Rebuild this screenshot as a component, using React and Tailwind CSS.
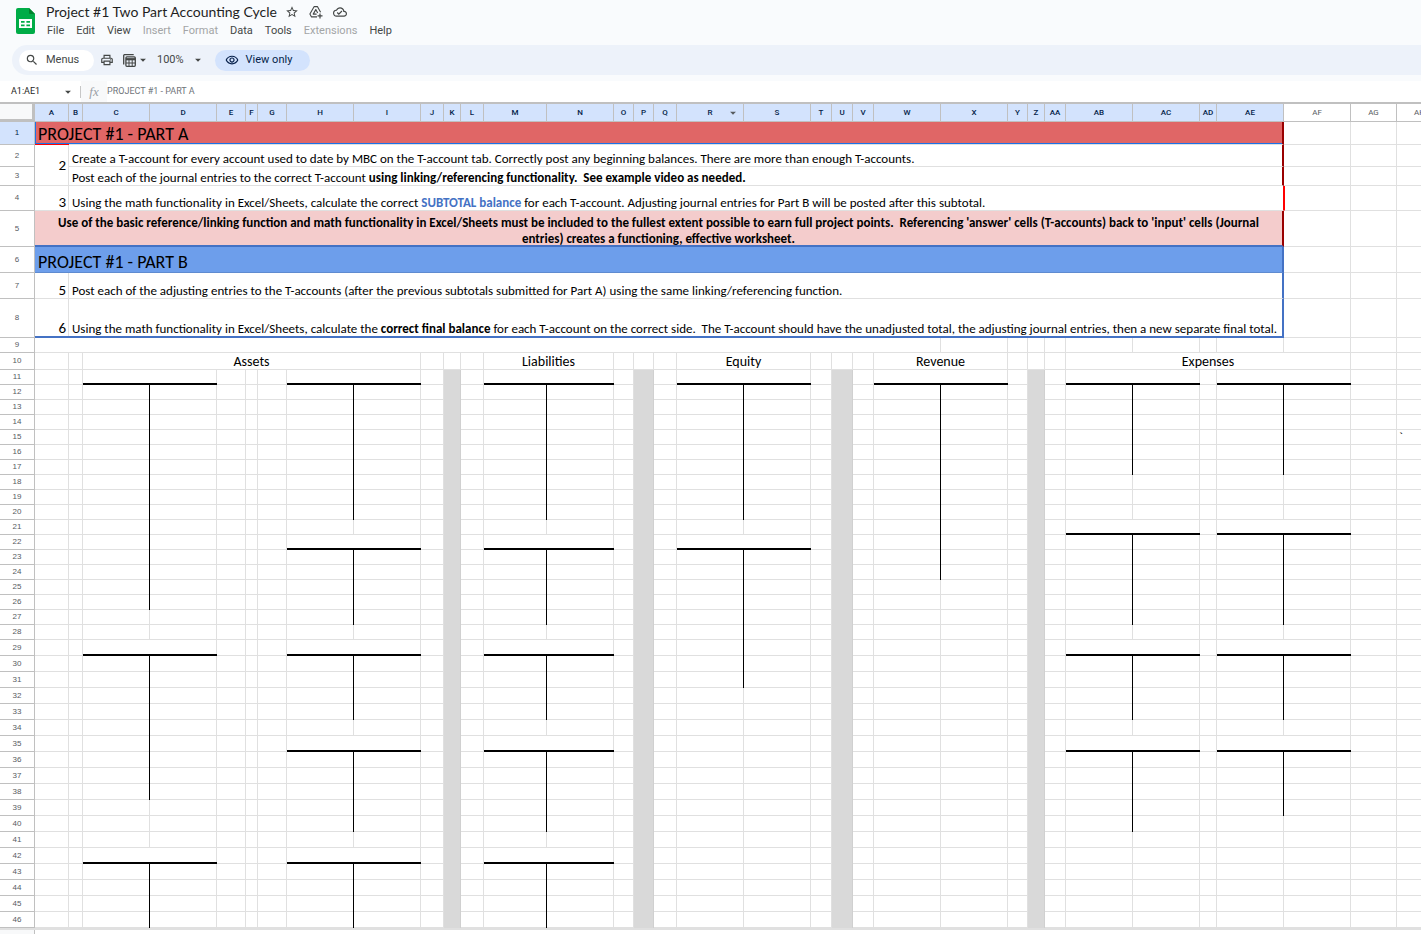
import {
  MdStarOutline,
  MdOutlineCloudDone,
  MdSearch,
  MdOutlinePrint,
  MdArrowDropDown,
  MdOutlineRemoveRedEye,
} from 'react-icons/md';

const MENUS = [
  { label: 'File' },
  { label: 'Edit' },
  { label: 'View' },
  { label: 'Insert', disabled: true },
  { label: 'Format', disabled: true },
  { label: 'Data' },
  { label: 'Tools' },
  { label: 'Extensions', disabled: true },
  { label: 'Help' },
];

const COLUMNS = [
  ['A', 34], ['B', 14], ['C', 67], ['D', 67], ['E', 29], ['F', 12], ['G', 29],
  ['H', 67], ['I', 67], ['J', 23], ['K', 17], ['L', 23], ['M', 63], ['N', 67],
  ['O', 20], ['P', 20], ['Q', 23], ['R', 67], ['S', 67], ['T', 21], ['U', 21],
  ['V', 21], ['W', 67], ['X', 67], ['Y', 20], ['Z', 17], ['AA', 21], ['AB', 67],
  ['AC', 67], ['AD', 17], ['AE', 67], ['AF', 67], ['AG', 46], ['AH', 46],
];
const NAMES = COLUMNS.map(([name]) => name);
const HEADER_WIDTH = 35;
const TABLE_WIDTH = COLUMNS.reduce((sum, [, w]) => sum + w, HEADER_WIDTH);
const LAST_SELECTED = NAMES.indexOf('AE');
const LAST_ROW = 46;

const TALL_ROWS = { 1: 23, 2: 22, 3: 19, 4: 25, 5: 36, 6: 26, 7: 26, 8: 39, 10: 17 };
const rowHeight = (row) => TALL_ROWS[row] || (row < 29 ? 15 : 16);

const SHADED = ['K', 'P', 'U', 'Z'];

// left column of each T-account: [title row, last row of the stem]
const T_ACCOUNTS = {
  C: [[11, 26], [29, 38], [42, 46]],
  H: [[11, 20], [22, 27], [29, 33], [35, 40], [42, 46]],
  M: [[11, 20], [22, 27], [29, 33], [35, 40], [42, 46]],
  R: [[11, 20], [22, 31]],
  W: [[11, 24]],
  AB: [[11, 17], [21, 27], [29, 33], [35, 40]],
  AE: [[11, 17], [21, 27], [29, 33], [35, 39]],
};

const GRID = 'border-r border-b border-[#e0e0e0]';
const BODY = 'align-bottom text-left pl-[3px] text-[13px] leading-[14px] border-b border-b-[#e0e0e0]';
const STEP = 'align-bottom text-right pr-[2px] text-[15px] leading-4 border-r border-b border-[#e0e0e0]';
const BANNER = 'align-bottom text-left pl-[3px] text-[18px] leading-5';
const GROUP = 'align-bottom text-center text-[14px] leading-[14px] border-r border-b border-[#e0e0e0]';

// "cell": { to, rows, className, text }
const MERGED = {
  A1: {
    to: 'AE',
    className: `${BANNER} bg-[#e06666] border-b border-b-[#e0e0e0] border-r-2 border-r-[#990000] shadow-[inset_1px_-1px_0_#1a73e8]`,
    text: 'PROJECT #1 - PART A',
  },
  A2: {
    to: 'A',
    rows: 2,
    className: 'align-middle text-right pr-[2px] text-[15px] leading-4 border-r border-b border-[#e0e0e0] shadow-[0_-1px_0_#ff0000]',
    text: '2',
  },
  B2: {
    to: 'AE',
    className: `${BODY} border-r-2 border-r-[#990000]`,
    text: 'Create a T-account for every account used to date by MBC on the T-account tab. Correctly post any beginning balances. There are more than enough T-accounts.',
  },
  B3: {
    to: 'AE',
    className: `${BODY} border-r-2 border-r-[#990000]`,
    text: (
      <>
        Post each of the journal entries to the correct T-account{' '}
        <b>using linking/referencing functionality.&nbsp; See example video as needed.</b>
      </>
    ),
  },
  A4: { to: 'A', className: STEP, text: '3' },
  B4: {
    to: 'AE',
    className: `${BODY} border-r border-r-[#ff0000]`,
    text: (
      <>
        Using the math functionality in Excel/Sheets, calculate the correct{' '}
        <b className="text-[#4472c4]">SUBTOTAL balance</b> for each T-account. Adjusting journal
        entries for Part B will be posted after this subtotal.
      </>
    ),
  },
  AF4: { to: 'AF', className: `${GRID} border-l border-l-[#ff0000]` },
  A5: {
    to: 'AE',
    className: 'align-bottom text-center text-[13px] leading-4 font-bold bg-[#f4cccc] border-b-2 border-b-[#4472c4] border-r-2 border-r-[#990000]',
    text: (
      <p className="h-[30px]">
        Use of the basic reference/linking function and math functionality in Excel/Sheets must be
        included to the fullest extent possible to earn full project points.&nbsp; Referencing
        'answer' cells (T-accounts) back to 'input' cells (Journal
        <br />
        entries) creates a functioning, effective worksheet.
      </p>
    ),
  },
  A6: {
    to: 'AE',
    className: `${BANNER} bg-[#6d9eeb] border-b border-b-[#5f8bd0] border-r-2 border-r-[#4472c4]`,
    text: 'PROJECT #1 - PART B',
  },
  A7: { to: 'A', className: STEP, text: '5' },
  B7: {
    to: 'AE',
    className: `${BODY} border-r-2 border-r-[#4472c4]`,
    text: 'Post each of the adjusting entries to the T-accounts (after the previous subtotals submitted for Part A) using the same linking/referencing function.',
  },
  A8: {
    to: 'A',
    className: 'align-bottom text-right pr-[3px] text-[15px] leading-4 border-b-2 border-b-[#4472c4] shadow-[inset_-1px_0_0_#e0e0e0]',
    text: '6',
  },
  B8: {
    to: 'AE',
    className: 'align-bottom text-left pl-[3px] text-[13px] leading-[14px] border-b-2 border-r-2 border-[#4472c4]',
    text: (
      <>
        Using the math functionality in Excel/Sheets, calculate the <b>correct final balance</b> for
        each T-account on the correct side.&nbsp; The T-account should have the unadjusted total,
        the adjusting journal entries, then a new separate final total.
      </>
    ),
  },
  A9: { to: 'W', className: GRID },
  C10: { to: 'I', className: GROUP, text: 'Assets' },
  M10: { to: 'N', className: GROUP, text: 'Liabilities' },
  R10: { to: 'S', className: GROUP, text: 'Equity' },
  W10: { to: 'X', className: GROUP, text: 'Revenue' },
  AB10: { to: 'AF', className: GROUP, text: 'Expenses' },
  AH15: { to: 'AH', className: `${GRID} align-bottom text-left pl-[2px] text-[13px] leading-[14px]`, text: '`' },
};

function plainCell(name, row) {
  if (SHADED.includes(name) && row > 10) {
    return { span: 1, className: 'bg-[#d9d9d9] border-r border-[#d0d0d0]' };
  }
  const accounts = T_ACCOUNTS[name] || [];
  if (accounts.some(([top]) => top === row)) {
    return { span: 2, className: 'border-b-2 border-b-black shadow-[inset_-1px_0_0_#e0e0e0]' };
  }
  if (accounts.some(([top, end]) => row > top && row <= end)) {
    return { span: 1, className: 'border-r border-r-black shadow-[inset_0_-1px_0_#e0e0e0]' };
  }
  return { span: 1, className: GRID };
}

function rowCells(row) {
  const cells = [];
  let col = row === 3 ? 1 : 0; // A2 reaches down into row 3
  while (col < NAMES.length) {
    const name = NAMES[col];
    const merged = MERGED[name + row];
    const cell = merged
      ? { ...merged, span: NAMES.indexOf(merged.to) - col + 1 }
      : plainCell(name, row);
    cells.push({ ...cell, key: name + row });
    col += cell.span;
  }
  return cells;
}

function SheetsLogo() {
  return (
    <svg width="19" height="26" viewBox="0 0 19 26" aria-hidden="true">
      <path d="M2 0h11l6 6v18a2 2 0 0 1-2 2H2a2 2 0 0 1-2-2V2a2 2 0 0 1 2-2z" fill="#00ac47" />
      <path d="M13 0l6 6h-5a1 1 0 0 1-1-1z" fill="#00832d" />
      <path d="M3 11h13v9H3zM5 13v1.8h3.6V13zM10.4 13v1.8H14V13zM5 16.4v1.8h3.6v-1.8zM10.4 16.4v1.8H14v-1.8z" fill="#fff" fillRule="evenodd" />
    </svg>
  );
}

function AddToDriveIcon() {
  return (
    <svg width="14" height="14" viewBox="0 0 14 14" fill="none" stroke="#444746" strokeWidth="1.1" strokeLinejoin="round" aria-hidden="true">
      <path d="M8 11.9H2.5L.9 9.1 5.2 1.6h3.2l3.2 5.6" />
      <path d="M7.6 9.1H4.2L6.8 4.6l1.9 3.3" />
      <path d="M11 8.4v5M8.5 10.9h5" strokeWidth="1.2" />
    </svg>
  );
}

function FilterViewIcon() {
  return (
    <svg width="13" height="13" viewBox="0 0 13 13" fill="none" stroke="#444746" aria-hidden="true">
      <path d="M.7 10.5V1.6a1 1 0 0 1 1-1h9" strokeWidth="1.3" />
      <rect x="2.9" y="2.9" width="9.4" height="9.4" rx="1" strokeWidth="1.3" />
      <path d="M3 5.2h9.2" strokeWidth="2.2" />
      <path d="M3 9h9.2M6 6v6M9.2 6v6" />
    </svg>
  );
}

function Header() {
  return (
    <header className="flex h-[45px] items-start gap-[11px] pl-4">
      <a href="#home" aria-label="Sheets home" className="mt-2">
        <SheetsLogo />
      </a>
      <div>
        <div className="flex items-center pt-[3px] text-[#444746]">
          <h1 className="font-[Lato,sans-serif] text-[14px] leading-[18px] text-[#1f1f1f]">
            Project #1 Two Part Accounting Cycle
          </h1>
          <div className="ml-2 flex gap-[10px]">
            <button aria-label="Star"><MdStarOutline size={14} /></button>
            <button aria-label="Add shortcut to Drive"><AddToDriveIcon /></button>
            <button aria-label="Document status"><MdOutlineCloudDone size={14} /></button>
          </div>
        </div>
        <nav className="mt-[2px] flex gap-3 pl-px text-[11px] leading-4 text-[#444746]">
          {MENUS.map((menu) => (
            <button key={menu.label} disabled={menu.disabled} className="disabled:text-[#a3a5a6]">
              {menu.label}
            </button>
          ))}
        </nav>
      </div>
    </header>
  );
}

function Toolbar() {
  return (
    <div className="ml-3 flex h-[30px] items-center rounded-l-full bg-[#edf2fa] pl-[7px] text-[11px] text-[#444746]">
      <button className="flex h-[21px] w-[75px] items-center gap-[7px] rounded-full bg-white pl-[6px]">
        <MdSearch size={14} />
        Menus
      </button>
      <button aria-label="Print" className="ml-[6px]"><MdOutlinePrint size={14} /></button>
      <button aria-label="Filter views" className="ml-[9px] flex items-center">
        <FilterViewIcon />
        <MdArrowDropDown size={14} />
      </button>
      <button className="ml-[7px] flex items-center gap-[7px]">
        100%
        <MdArrowDropDown size={14} />
      </button>
      <button className="ml-[10px] flex h-[21px] w-[95px] items-center gap-[7px] rounded-full bg-[#d3e3fd] pl-[10px] text-[#041e49]">
        <MdOutlineRemoveRedEye size={14} />
        View only
      </button>
    </div>
  );
}

function FormulaBar() {
  return (
    <div className="mt-[6px] flex h-[23px] items-center border-b-2 border-[#c0c0c0] bg-white text-[9px]">
      <button className="flex w-20 items-center justify-between pl-[11px] pr-[5px] text-[#1f1f1f]">
        A1:AE1
        <MdArrowDropDown size={14} className="text-[#444746]" />
      </button>
      <span className="h-3 w-px bg-[#c7c7c7]" />
      <label
        htmlFor="formula"
        className="flex h-full w-[26px] items-center justify-center bg-[#f8f9fa] font-['Liberation_Serif',serif] text-[13px] italic text-[#9aa0a6]"
      >
        fx
      </label>
      <input id="formula" readOnly defaultValue="PROJECT #1 - PART A" className="min-w-0 flex-1 text-[#70757a] outline-none" />
    </div>
  );
}

function Sheet() {
  const rows = Array.from({ length: LAST_ROW }, (_, i) => i + 1);
  return (
    <div className="overflow-hidden border-b-2 border-[#e0e0e0]">
      <table className="table-fixed border-separate border-spacing-0 bg-white" style={{ width: TABLE_WIDTH }}>
        <colgroup>
          <col style={{ width: HEADER_WIDTH }} />
          {COLUMNS.map(([name, width]) => (
            <col key={name} style={{ width }} />
          ))}
        </colgroup>
        <thead className="text-[8px] leading-[10px]">
          <tr className="h-[18px]">
            <td className="border-r-3 border-b-3 border-[#c0c0c0] bg-[#f8f9fa]" />
            {NAMES.map((name, i) => (
              <th
                key={name}
                scope="col"
                className={
                  i <= LAST_SELECTED
                    ? 'border-r border-b border-[#c0c0c0] bg-[#d3e3fd] font-medium text-[#041e49]'
                    : 'border-r border-b border-[#c0c0c0] bg-white font-normal text-[#575b5f]'
                }
              >
                {name === 'R' ? (
                  <span className="relative block">
                    R
                    <MdArrowDropDown size={14} className="absolute -top-[2px] right-[3px] text-[#575b5f]" />
                  </span>
                ) : (
                  name
                )}
              </th>
            ))}
          </tr>
        </thead>
        <tbody className="font-[Carlito,Lato,sans-serif] text-black">
          {rows.map((row) => (
            <tr key={row} style={{ height: rowHeight(row) }}>
              <th
                scope="row"
                className={
                  row === 1
                    ? "border-r border-b border-[#c0c0c0] bg-[#d3e3fd] font-['Liberation_Sans',sans-serif] text-[8px] leading-[10px] font-normal text-[#041e49]"
                    : "border-r border-b border-[#c0c0c0] bg-white font-['Liberation_Sans',sans-serif] text-[8px] leading-[10px] font-normal text-[#575b5f]"
                }
              >
                {row}
              </th>
              {rowCells(row).map((cell) => (
                <td
                  key={cell.key}
                  colSpan={cell.span}
                  rowSpan={cell.rows}
                  className={`whitespace-nowrap ${cell.className}`}
                >
                  {cell.text}
                </td>
              ))}
            </tr>
          ))}
        </tbody>
      </table>
    </div>
  );
}

function App() {
  return (
    <div className="min-h-screen overflow-hidden bg-[#f9fbfd] font-[Roboto,sans-serif]">
      <Header />
      <Toolbar />
      <FormulaBar />
      <Sheet />
      <div className="flex h-[5px] bg-white">
        <div className="w-[35px] border-r border-[#c0c0c0] bg-[#f8f9fa]" />
      </div>
    </div>
  );
}

export default App;
